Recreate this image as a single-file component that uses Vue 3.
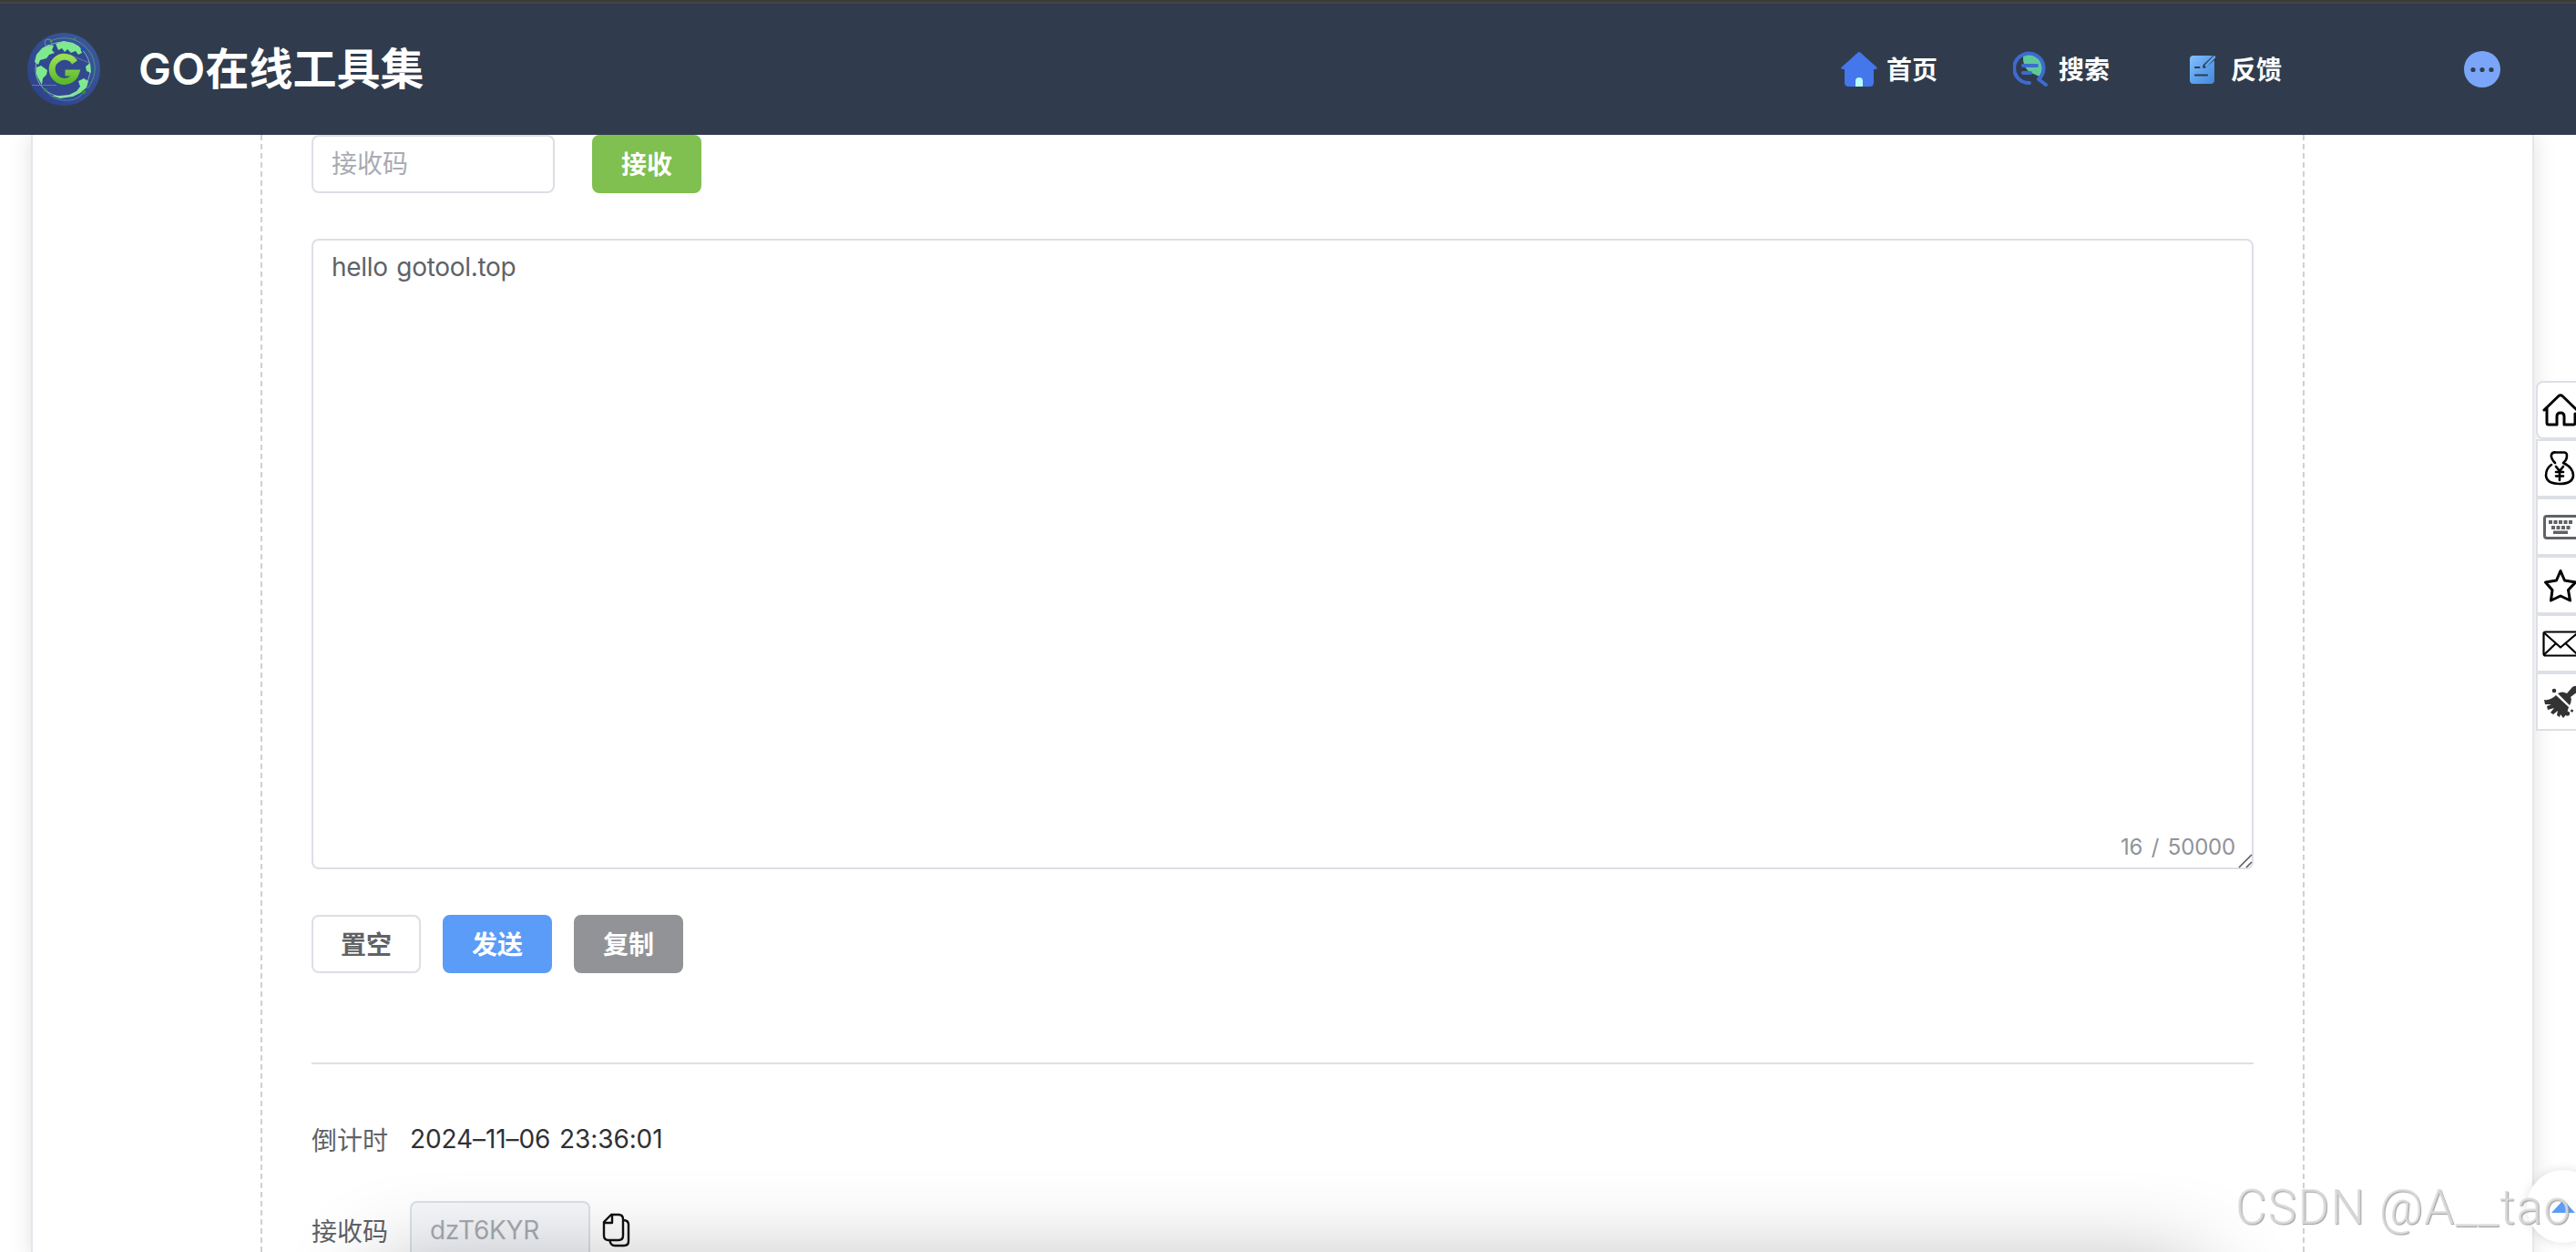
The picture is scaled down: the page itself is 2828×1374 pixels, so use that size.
<script setup>
import { ref } from 'vue'

const code = ref('')
const content = ref('hello gotool.top')
const deadline = ref('2024–11–06 23:36:01')
const sendCode = ref('dzT6KYR')
const count = ref(16)

function clearContent() {
    content.value = ''
    count.value = 0
}
</script>

<template>
    <div class="page">
        <header class="header">
            <svg class="logo" viewBox="0 0 80 80">
                <defs>
                    <linearGradient id="ball" x1="1" y1="0" x2="0" y2="1">
                        <stop offset="0" stop-color="#3d5a9c" />
                        <stop offset="1" stop-color="#2b4088" />
                    </linearGradient>
                    <linearGradient id="letter" x1="0" y1="0" x2="0" y2="1">
                        <stop offset="0" stop-color="#98e052" />
                        <stop offset="1" stop-color="#5cba2c" />
                    </linearGradient>
                </defs>
                <circle cx="40" cy="40" r="40" fill="url(#ball)" />
                <circle cx="39" cy="40" r="31" fill="#32488f" />
                <g fill="#7deb8c">
                    <path d="M8 32L10 24L16 17L23 13L29 14L27 19L30 22L24 24L21 28L14 30L12 35Z" />
                    <path d="M31 12L40 9L50 11L57 15L60 22L56 24L53 20L48 22L44 18L41 21L38 17L34 19Z" />
                    <path d="M10 38L15 36L22 41L21 46L17 50L16 57L12 50L10 45Z" />
                    <path d="M64 37L69 33L70 44L65 42Z" />
                    <path d="M56 53L62 50L67 53L65 60L58 66L50 70L36 72L27 69L36 69L46 68L54 64L58 59Z" />
                </g>
                <circle cx="39" cy="40" r="30" fill="none" stroke="#9ec9cf" stroke-width="0.8" />
                <path d="M26 9C42 1 62 8 71 25C77 38 74 51 66 61" fill="none" stroke="#56a183" stroke-width="0.8" />
                <path d="M20 63C27 73 38 75 46 74C57 73 60 67 63 64M32 34L46 24L68 33M5 57.500H32" fill="none" stroke="#7292b4" stroke-width="0.7" />
                <circle cx="23" cy="11" r="4" fill="none" stroke="#7cacb2" stroke-width="0.7" />
                <circle cx="26" cy="9" r="1.500" fill="#35a64a" />
                <circle cx="52" cy="6.500" r="1.500" fill="#318c73" />
                <circle cx="61" cy="18" r="2" fill="#1952b4" />
                <circle cx="20" cy="63" r="1.800" fill="#349537" />
                <circle cx="62" cy="65" r="2.200" fill="#328f2c" />
                <circle cx="45" cy="74" r="1.600" fill="#2463cc" />
                <path d="M51.500 31.500A13.500 13.500 0 1 0 53 43H41" fill="none" stroke="url(#letter)" stroke-width="7" transform="translate(.5 1)" />
            </svg>
            <h1 class="title"><span class="go">GO</span>在线工具集</h1>
            <nav class="nav">
                <a class="nav-item">
                    <svg class="shifted" width="40" height="40" viewBox="0 0 40 40">
                        <path d="M18.500 1.700Q20 .3 21.500 1.700L39 17.500Q41 20 37.500 20H36V34.500Q36 39 31.500 39H8.500Q4 39 4 34.500V20H2.500Q-1 20 1 17.500Z" fill="#4476ec" />
                        <path d="M16 39V33a4 4 0 0 1 8 0V39Z" fill="#b9fbff" />
                    </svg>
                    <span>首页</span>
                </a>
                <a class="nav-item">
                    <svg class="shifted" width="40" height="40" viewBox="0 0 40 40">
                        <path d="M11 5Q22 2 30 9Q36 18 29 28L20 24Q10 19 11 5Z" fill="#5fc89b" />
                        <path d="M18 35A16.200 16.200 0 1 1 28 31L36 37" fill="none" stroke="#3d6bcf" stroke-width="4" stroke-linecap="round" stroke-linejoin="round" />
                        <path d="M11 16H26M11 24H19" stroke="#3d6bcf" stroke-width="4" stroke-linecap="round" />
                    </svg>
                    <span>搜索</span>
                </a>
                <a class="nav-item">
                    <svg width="40" height="40" viewBox="0 0 40 40">
                        <defs>
                            <linearGradient id="note" x1="0" y1="0" x2="1" y2="1">
                                <stop offset="0" stop-color="#85c0fb" />
                                <stop offset=".45" stop-color="#62a5ef" />
                                <stop offset="1" stop-color="#4489dc" />
                            </linearGradient>
                        </defs>
                        <rect x="6" y="5" width="27" height="31" rx="4" fill="url(#note)" />
                        <path d="M12 18H16.500M12 26.500H25" stroke="#303c4d" stroke-width="2.200" stroke-linecap="round" />
                        <path d="M33 5L22 15Q20 18 22 18L34 8" fill="#62a5ef" stroke="#303c4d" stroke-width="1.800" />
                        <path d="M24 16L33 6.500" stroke="#62a5ef" stroke-width="2.600" stroke-linecap="round" />
                    </svg>
                    <span>反馈</span>
                </a>
                <svg class="more" width="40" height="40" viewBox="0 0 40 40">
                    <circle cx="20" cy="20" r="20" fill="#7ba5f8" />
                    <g fill="#303c4d">
                        <circle cx="10" cy="20.500" r="2.600" />
                        <circle cx="20" cy="20.500" r="2.600" />
                        <circle cx="30" cy="20.500" r="2.600" />
                    </g>
                </svg>
            </nav>
        </header>

        <main class="card">
            <section class="panel">
                <div class="row receive">
                    <input v-model="code" class="input code" placeholder="接收码">
                    <button class="btn green">接收</button>
                </div>

                <div class="editor">
                    <textarea v-model="content" class="textarea"></textarea>
                    <span class="count">{{ count }} / 50000</span>
                    <svg class="grip" width="16" height="16" viewBox="0 0 16 16">
                        <path d="M1 15L15 1M9 15L15 9" stroke="#555" stroke-width="1.500" />
                    </svg>
                </div>

                <div class="row actions">
                    <button class="btn" @click="clearContent">置空</button>
                    <button class="btn blue">发送</button>
                    <button class="btn gray">复制</button>
                </div>

                <div class="divider"></div>

                <div class="row info">
                    <span class="label">倒计时</span>
                    <span class="time">{{ deadline }}</span>
                </div>
                <div class="row info second">
                    <span class="label">接收码</span>
                    <input class="input disabled" :value="sendCode" disabled>
                    <svg class="copy" width="32" height="40" viewBox="0 0 32 40" fill="none" stroke="#111" stroke-width="2.400">
                        <path d="M10 3H18Q23 3 23 8V26Q23 31 18 31H7Q2 31 2 26V11ZM11 3V12H2" stroke-linejoin="round" />
                        <path d="M23 9Q29 9 29 14V32Q29 37 24 37H14Q9 37 8.500 31" />
                    </svg>
                </div>
            </section>
        </main>

        <aside class="side">
            <a class="side-item">
                <svg width="40" height="40" viewBox="0 0 40 40" fill="none" stroke="#000" stroke-width="3" stroke-linejoin="round" stroke-linecap="round">
                    <path d="M3 20L19 4.500Q21 3 23 4.500L39 20M6 18V34Q6 36 8 36H17V27Q17 23 21 23T25 27V36H35Q37 36 37 34V24" />
                </svg>
            </a>
            <a class="side-item">
                <svg width="40" height="40" viewBox="0 0 40 40" fill="none" stroke="#000" stroke-width="2.600" stroke-linecap="round" stroke-linejoin="round">
                    <path d="M15 14Q10 9 11 5Q12 2 16 2.500H24Q28 2 28 6Q28 11 24 14Q35 19 35 28Q34 37 20 37T5 28Q5 20 11 16" />
                    <path d="M16 18L20 23L24 18M16 24H24M16 28.500H24M20 23V33" />
                </svg>
            </a>
            <a class="side-item">
                <svg width="40" height="40" viewBox="0 0 40 40">
                    <rect x="3.500" y="8.500" width="37" height="24" rx="2.500" fill="none" stroke="#606266" stroke-width="3" />
                    <g fill="#606266">
                        <path d="M8 13h4v4h-4zM13.500 13h4v4h-4zM19 13h4v4h-4zM24.500 13h4v4h-4zM30 13h4v4h-4z" />
                        <path d="M11 19h4v4h-4zM16.500 19h4v4h-4zM22 19h4v4h-4zM27.500 19h4v4h-4zM13 24.500h16v3.500h-16z" />
                    </g>
                </svg>
            </a>
            <a class="side-item">
                <svg width="40" height="40" viewBox="0 0 40 40" fill="none" stroke="#000" stroke-width="3" stroke-linejoin="round">
                    <path d="M21 4.500L25.500 15L37.500 17L29.500 25.500L31.500 37L21 32L10.500 37L12 25.500L4.500 17L16.500 15Z" />
                </svg>
            </a>
            <a class="side-item">
                <svg width="40" height="40" viewBox="0 0 40 40" fill="none" stroke="#000" stroke-width="2.200" stroke-linejoin="round">
                    <rect x="2.500" y="7.500" width="39" height="26" rx="2" />
                    <path d="M3 8.500L21 24.500L40 8.500M3 32.500L15.500 20.500M40 32.500L27 20.500" />
                </svg>
            </a>
            <a class="side-item">
                <svg width="40" height="40" viewBox="0 0 40 40" fill="#333">
                    <path d="M28 11L34 4Q37 2 40 3V9L32 15Q34 18 31 24L18 11Q23 8 28 11Z" />
                    <path d="M16 13L30 26Q28 34 24 38L21 34L20 37L17 35L18 30L13 34L10 32L14 27L7 29L6 25L11 23H4L3 18Q10 19 16 13Z" />
                    <circle cx="14" cy="8" r="2.300" />
                    <circle cx="28.500" cy="33" r="2.600" />
                    <circle cx="33.500" cy="30" r="1.500" />
                </svg>
            </a>
        </aside>

        <div class="dock-shadow"></div>
        <div class="backtop">
            <svg width="26" height="14" viewBox="0 0 26 14"><path d="M13 0L26 14H0Z" fill="#5a9cf8" /></svg>
        </div>
        <div class="watermark">CSDN @A__tao</div>
    </div>
</template>

<style>
body {
    margin: 0;
    overflow: hidden;
}
</style>

<style scoped>
.page {
    position: relative;
    height: 1374px;
    overflow: hidden;
    background: #fff;
    font-family: Inter, "Noto Sans CJK SC", sans-serif;
    font-size: 28px;
    color: #606266;
    display: flex;
    flex-direction: column;
}

.page * {
    box-sizing: border-box;
}

.header {
    height: 148px;
    flex: none;
    position: relative;
    z-index: 2;
    display: flex;
    align-items: center;
    padding: 4px 83px 0 30px;
    background: linear-gradient(#3b3b3b 2px, #464641 2px, #464641 4px, #303c4d 4px);
    color: #fff;
}

.logo {
    width: 80px;
    height: 80px;
}

.title {
    margin: 0 0 0 42px;
    font-size: 48px;
    font-weight: 700;
    line-height: 60px;
    white-space: nowrap;
}

.go {
    font-weight: 600;
    letter-spacing: 0.3px;
}

.nav {
    margin-left: auto;
    display: flex;
    align-items: center;
}

.nav-item {
    display: flex;
    align-items: center;
    gap: 11px;
    width: 107px;
    margin-right: 82px;
    font-weight: 700;
    line-height: 40px;
    white-space: nowrap;
}

.nav-item:nth-child(3) {
    margin-right: 200px;
}

.nav-item span {
    padding-top: 1px;
}

.shifted {
    margin: 0 -1px 0 1px;
}

/* card */
.card {
    flex: 1;
    margin: 0 46px 0 34px;
    border: solid #e4e7ed;
    border-width: 0 2px;
    box-shadow: 0 0 24px rgba(0, 0, 0, 0.12);
    padding: 0 250px;
}

.panel {
    height: 100%;
    padding: 0 56px;
    background:
        repeating-linear-gradient(#d0d0d0 0 6px, transparent 6px 10px) left / 2px 100% no-repeat,
        repeating-linear-gradient(#d0d0d0 0 6px, transparent 6px 10px) right / 2px 100% no-repeat;
}

.row {
    display: flex;
    align-items: center;
}

.input {
    height: 64px;
    border: 2px solid #dcdfe6;
    border-radius: 8px;
    padding: 0 20px;
    font: inherit;
    color: #606266;
    outline: none;
}

.input::placeholder {
    color: #a8abb2;
}

.code {
    width: 267px;
    margin-right: 41px;
}

.btn {
    width: 120px;
    height: 64px;
    padding: 0 0 2px;
    border: 2px solid #dcdfe6;
    border-radius: 8px;
    background: #fff;
    font: inherit;
    font-weight: 600;
    color: #606266;
}

.green {
    background: #7fc050;
    border-color: #7fc050;
    color: #fff;
}

.blue {
    background: #5a9cf8;
    border-color: #5a9cf8;
    color: #fff;
}

.gray {
    background: #929397;
    border-color: #929397;
    color: #fff;
}

.editor {
    position: relative;
    height: 692px;
    margin-top: 50px;
}

.textarea {
    display: block;
    width: 100%;
    height: 100%;
    padding: 8px 20px;
    border: 2px solid #dcdfe6;
    border-radius: 8px;
    font: inherit;
    line-height: 42px;
    letter-spacing: -0.3px;
    word-spacing: 2px;
    color: #606266;
    resize: none;
    outline: none;
}

.count {
    position: absolute;
    right: 20px;
    bottom: 10px;
    font-size: 24px;
    line-height: 28px;
    letter-spacing: -0.2px;
    word-spacing: 3px;
    color: #909399;
}

.grip {
    position: absolute;
    right: 1px;
    bottom: 1px;
}

.actions {
    margin-top: 50px;
    gap: 24px;
}

.divider {
    height: 2px;
    margin-top: 98px;
    background: #dcdfe6;
}

.info {
    height: 64px;
    margin-top: 50px;
}

.info.second {
    margin-top: 36px;
}

.label {
    width: 108px;
}

.time {
    letter-spacing: -0.1px;
    word-spacing: 2px;
    color: #303133;
}

.disabled {
    width: 198px;
    background: #f5f7fa;
    color: #a8abb2;
    letter-spacing: -0.3px;
}

.copy {
    margin-left: 13px;
}

/* floating tools at the right edge */
.side {
    position: absolute;
    left: 2784px;
    top: 418px;
}

.side-item {
    display: flex;
    align-items: center;
    width: 64px;
    height: 64px;
    padding-left: 4px;
    border: 2px solid #dcdfe6;
    background: #fff;
}

.side-item:first-child {
    border-radius: 8px;
}

.dock-shadow {
    position: absolute;
    left: 415px;
    top: 1390px;
    width: 2000px;
    height: 200px;
    box-shadow: 0 0 100px rgba(0, 0, 0, 0.3);
}

.backtop {
    position: absolute;
    left: 2774px;
    top: 1284px;
    width: 80px;
    height: 80px;
    border-radius: 50%;
    background: #fff;
    box-shadow: 0 0 12px rgba(0, 0, 0, 0.12);
    display: flex;
    align-items: center;
    justify-content: center;
}

.watermark {
    position: absolute;
    left: 2454px;
    top: 1293px;
    font-family: Roboto, "Liberation Sans", sans-serif;
    font-size: 53px;
    font-weight: 300;
    line-height: 64px;
    letter-spacing: 1.3px;
    color: rgba(222, 222, 222, 0.85);
    text-shadow: 1px 1px 1px rgba(120, 120, 120, 0.7);
    white-space: nowrap;
}
</style>
